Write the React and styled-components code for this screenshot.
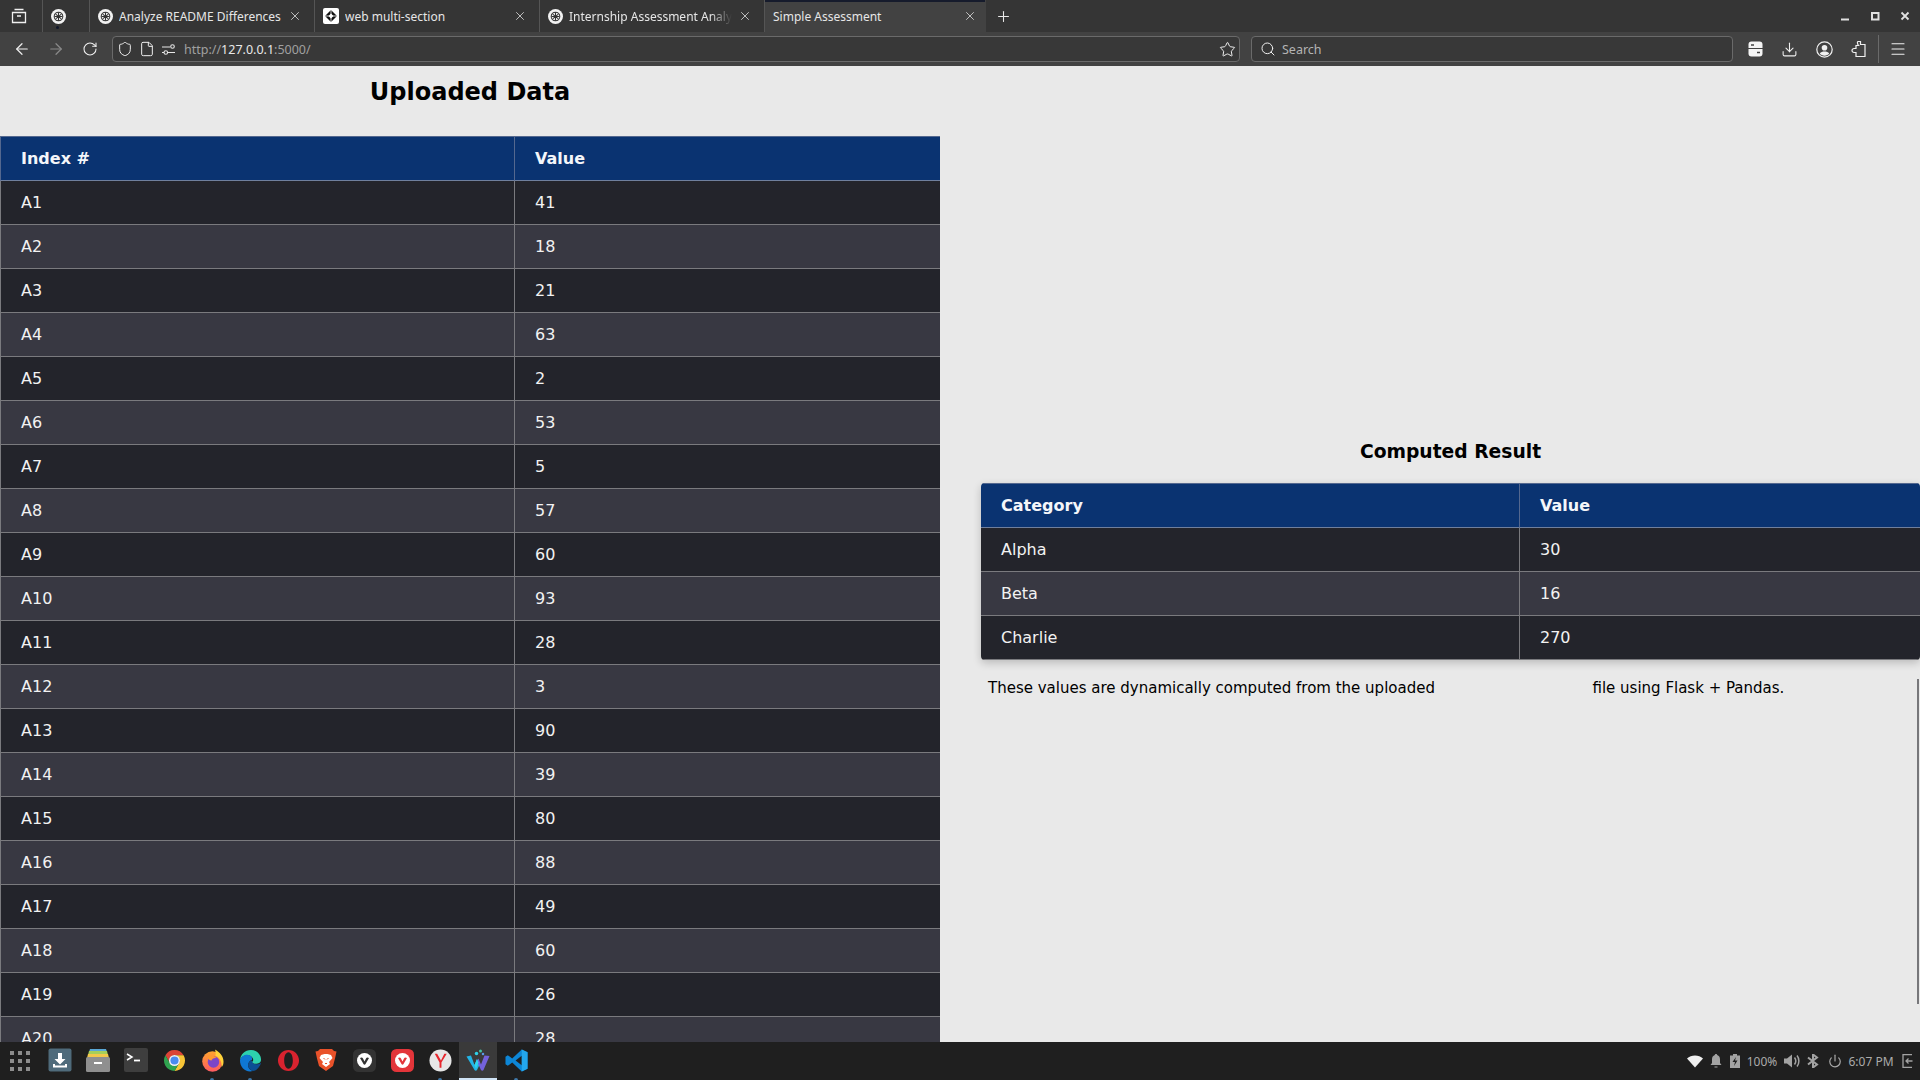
import React from 'react';
import styled, { createGlobalStyle } from 'styled-components';
import { ArrowLeft, ArrowRight, RotateCw, Shield, File, Star, Search, Download, Menu, X, Plus, Power } from 'lucide-react';

const GlobalStyle = createGlobalStyle`
    html, body { margin: 0; padding: 0; height: 100%; overflow: hidden; }
    #root { height: 100%; }
`;

const Screen = styled.div`
    position: relative;
    height: 1080px;
    display: flex;
    flex-direction: column;
    overflow: hidden;
    font-family: "DejaVu Sans", sans-serif;
    background: #e9e9e9;
`;

const TabStrip = styled.div`
    height: 32px;
    flex: none;
    display: flex;
    align-items: stretch;
    background: #353535;
    color: #e8e8e8;
    font-family: "Noto Sans", sans-serif;
    font-size: 12px;
`;
const StripButton = styled.div`
    width: ${p => p.$width}px;
    flex: none;
    display: flex;
    align-items: center;
    justify-content: center;
`;
const Pinned = styled.div`
    width: 48px;
    flex: none;
    position: relative;
    box-sizing: border-box;
    display: flex;
    align-items: center;
    margin-left: 5px;
    padding-left: 8px;
    border-left: 1px solid #555;
    border-right: 1px solid #555;
`;
const PinnedDot = styled.span`
    position: absolute;
    left: 13px;
    bottom: 3px;
    width: 3px;
    height: 3px;
    border-radius: 50%;
    background: #10162a;
`;
const Tab = styled.div`
    width: ${p => p.$width}px;
    flex: none;
    box-sizing: border-box;
    display: flex;
    align-items: center;
    gap: 6px;
    padding: 0 ${p => p.$active ? 8 : 12}px 0 8px;
    background: ${p => p.$active ? '#424242' : 'transparent'};
    border-right: 1px solid ${p => p.$active ? 'transparent' : '#555'};
    box-shadow: ${p => p.$active ? 'inset 0 2px 0 #161b2c' : 'none'};
`;
const TabTitle = styled.span`
    flex: 1;
    white-space: nowrap;
    overflow: hidden;
    color: #e6e6e6;
    mask-image: ${p => p.$fade ? 'linear-gradient(to left, transparent 0, #000 22px)' : 'none'};
`;
const WindowButtons = styled.div`
    margin-left: auto;
    display: flex;
    align-items: center;
    gap: 20px;
    padding-right: 10px;
`;
const Toolbar = styled.div`
    height: 34px;
    flex: none;
    display: flex;
    align-items: center;
    padding-left: 5px;
    background: #424242;
    color: #f0f0f0;
    font-family: "Noto Sans", sans-serif;
    font-size: 12.5px;
`;
const ToolButton = styled.div`
    width: ${p => p.$width || 34}px;
    margin-left: ${p => p.$gap || 0}px;
    flex: none;
    display: flex;
    align-items: center;
    justify-content: center;
    color: ${p => p.$dim ? '#8a8a8a' : '#f0f0f0'};
`;
const Field = styled.div`
    width: ${p => p.$width}px;
    height: 26px;
    margin-left: ${p => p.$gap}px;
    flex: none;
    box-sizing: border-box;
    display: flex;
    align-items: center;
    gap: 6px;
    padding: 0 3px 0 ${p => p.$pad}px;
    background: #383838;
    border: 1px solid #6a6a6a;
    border-radius: 4px;
`;
const UrlText = styled.span`
    flex: 1;
    margin-left: 2px;
    color: #a0a0a0;
    b { font-weight: 400; color: #e8e8e8; }
`;
const SearchText = styled.span`
    color: #b4b4b4;
`;
const ToolSeparator = styled.div`
    width: 1px;
    height: 28px;
    margin: 0 2px;
    background: #6a6a6a;
`;
const Page = styled.main`
    flex: 1;
    min-height: 0;
    display: flex;
    gap: 41px;
    overflow: hidden;
    background: #e9e9e9;
    color: #000;
`;
const LeftColumn = styled.section`
    width: 940px;
    flex: none;
`;
const RightColumn = styled.section`
    flex: 1;
    padding-top: 374px;
`;
const MainTitle = styled.h1`
    margin: 0;
    height: 70px;
    padding-top: 12px;
    box-sizing: border-box;
    text-align: center;
    font-size: 24px;
    line-height: 28px;
    font-weight: 700;
`;
const SubTitle = styled.h2`
    margin: 0 0 19px;
    height: 24px;
    text-align: center;
    font-size: 18.72px;
    line-height: 24px;
    font-weight: 700;
`;
const DataTable = styled.table`
    width: 100%;
    border-collapse: separate;
    border-spacing: 0;
    table-layout: fixed;
    font-size: 16px;
    color: #f2f2f2;
    border-radius: ${p => p.$round ? 4 : 0}px;
    overflow: hidden;
    box-shadow: ${p => p.$round ? '0 3px 8px rgba(0, 0, 0, 0.2)' : 'none'};
    ${p => p.$round && 'th:first-child, td:first-child { border-left: none; }'}
`;
const SplitCol = styled.col`
    width: ${p => p.$width}px;
`;
const HeadCell = styled.th`
    height: 45px;
    box-sizing: border-box;
    padding: 0 20px;
    text-align: left;
    font-weight: 700;
    color: #f4f6fa;
    background: #0a3371;
    border-top: 1px solid #54688f;
    border-bottom: 1px solid #6f7f9d;
    border-left: 1px solid #54688f;
`;
const Cell = styled.td`
    height: 44px;
    box-sizing: border-box;
    padding: 0 20px;
    background: ${p => p.$even ? '#383842' : '#23242b'};
    border-bottom: 1px solid #7a7a7e;
    border-left: 1px solid #7a7a7e;
`;
const Note = styled.p`
    margin: 0;
    padding: 16px 0 0 7px;
    font-size: 15px;
    line-height: 24px;
`;
const Hidden = styled.span`
    display: inline-block;
    width: 148px;
`;
const ScrollThumb = styled.div`
    position: absolute;
    top: 679px;
    right: 1px;
    width: 2px;
    height: 325px;
    background: #77777a;
`;
const Taskbar = styled.footer`
    height: 38px;
    flex: none;
    display: flex;
    align-items: center;
    background: #1f1f1f;
    font-family: "Noto Sans", sans-serif;
    font-size: 12px;
    color: #a9a9a9;
`;
const GridDots = styled.div`
    width: 20px;
    height: 20px;
    margin: 0 11px 0 10px;
    flex: none;
    display: grid;
    grid-template-columns: repeat(3, 4px);
    justify-content: space-between;
    align-content: space-between;
    i { height: 4px; background: #8d8d8d; }
`;
const Launcher = styled.div`
    width: 38px;
    height: 38px;
    flex: none;
    position: relative;
    display: flex;
    align-items: center;
    justify-content: center;
    padding-bottom: 2px;
    box-sizing: border-box;
    background: ${p => p.$active ? '#3a3a3a' : 'transparent'};
    box-shadow: ${p => p.$active ? 'inset 0 -2px 0 #cfe3f5' : 'none'};
`;
const RunningDot = styled.span`
    position: absolute;
    bottom: 0;
    left: 17px;
    width: 4px;
    height: 2px;
    border-radius: 2px 2px 0 0;
    background: #3f78a8;
`;
const Tray = styled.div`
    margin-left: auto;
    display: flex;
    align-items: center;
    padding-right: 2px;
    color: #ababab;
`;
const TraySlot = styled.div`
    width: ${p => p.$width}px;
    flex: none;
    display: flex;
    align-items: center;
    justify-content: center;
`;

const OpenAiIcon = () => (
    <svg width="15" height="15" viewBox="0 0 16 16">
        <circle cx="8" cy="8" r="8" fill="#f2f2f2" />
        <g fill="none" stroke="#333" strokeWidth="1.1">
            <circle cx="8" cy="8" r="4.6" />
            <path d="M5 5.500l6 5M11 5.500l-6 5M8 3.400v9.200M3.800 8h8.400" />
        </g>
    </svg>
);
const KnotIcon = () => (
    <svg width="16" height="16" viewBox="0 0 16 16">
        <rect width="16" height="16" rx="2" fill="#fff" />
        <path d="M8 2l6 6-6 6-6-6z" fill="#111" />
        <path d="M8 5.500L10.500 8 8 10.500 5.500 8z" fill="#fff" />
        <path d="M8 2v12M2 8h12" stroke="#fff" strokeWidth=".8" />
    </svg>
);
const ArchiveIcon = () => (
    <svg width="16" height="16" viewBox="0 0 16 16" fill="none" stroke="#f0f0f0" strokeWidth="1.300">
        <path d="M3.500 1.500h9M1.500 4.500h13v10h-13zM6 8h4" />
    </svg>
);
const TuneIcon = () => (
    <svg width="15" height="16" viewBox="0 0 15 16" fill="none" stroke="#e8e8e8" strokeWidth="1.100">
        <path d="M1 6h8M1 11.500h2M7 11.500h7" />
        <circle cx="11.500" cy="5.500" r="1.800" />
        <circle cx="4.800" cy="11.500" r="1.800" />
    </svg>
);
const ToolboxIcon = () => (
    <svg width="15" height="16" viewBox="0 0 15 16">
        <rect x=".5" y=".5" width="14" height="15" rx="3" fill="#f4f4f4" />
        <path d="M0 7.500h15" stroke="#424242" />
        <path d="M3 4h3M9 11.500h3" stroke="#424242" strokeWidth="1.500" />
    </svg>
);
const AccountIcon = () => (
    <svg width="17" height="17" viewBox="0 0 17 17">
        <circle cx="8.500" cy="8.500" r="7.700" fill="none" stroke="#f0f0f0" strokeWidth="1.200" />
        <circle cx="8.500" cy="6.800" r="2.800" fill="#f0f0f0" />
        <path d="M3.800 12.600c1-1.500 2.800-2 4.700-2s3.700.500 4.700 2c-1 1.300-2.800 2.200-4.700 2.200s-3.700-.900-4.700-2.200z" fill="#f0f0f0" />
    </svg>
);
const PuzzleIcon = () => (
    <svg width="16" height="18" viewBox="0 0 16 18" fill="none" stroke="#f0f0f0" strokeWidth="1.200">
        <path d="M7 1.500h2.500v3H14v12H5v-4H3a2 2 0 0 1-2-2 2 2 0 0 1 2-2h2v-3h2.500C6.500 4.500 6 1.500 7 1.500z" />
    </svg>
);
const MinimizeIcon = () => (
    <svg width="10" height="10" viewBox="0 0 10 10"><path d="M1 8.500h8" stroke="#e0e0e0" strokeWidth="2" /></svg>
);
const MaximizeIcon = () => (
    <svg width="10" height="10" viewBox="0 0 10 10"><rect x="2" y="2" width="6.500" height="6.500" fill="none" stroke="#e0e0e0" strokeWidth="2" /></svg>
);
const CloseIcon = () => (
    <svg width="10" height="10" viewBox="0 0 10 10"><path d="M1.500 1.500l7 7M8.500 1.500l-7 7" stroke="#e0e0e0" strokeWidth="1.800" /></svg>
);
const DownloadTile = () => (
    <svg width="24" height="24" viewBox="0 0 24 24">
        <rect x=".500" y=".500" width="23" height="23" rx="2" fill="#4f6b7b" />
        <path d="M10 5h4v6h3.500L12 16.500 6.500 11H10zM5 16v3.500h14V16h-2v1.500H7V16z" fill="#fff" />
    </svg>
);
const FilesTile = () => (
    <svg width="24" height="26" viewBox="0 0 24 26">
        <path d="M4 2h16l1 3H3z" fill="#5aa8d6" />
        <path d="M3 4h18l1 4H2z" fill="#a6ce5a" />
        <path d="M2 7h20l1 4H1z" fill="#f1c84b" />
        <rect y="10" width="24" height="15" rx="1.500" fill="#8f8f8f" />
        <rect x="8" y="15" width="8" height="2" fill="#fff" />
    </svg>
);
const TerminalTile = () => (
    <svg width="24" height="24" viewBox="0 0 24 24">
        <rect width="24" height="24" rx="2" fill="#3e3e3e" />
        <path d="M3 6l5 3-5 3" fill="none" stroke="#fff" strokeWidth="1.500" />
        <path d="M10 12.500h6" stroke="#fff" strokeWidth="1.800" />
    </svg>
);
const ChromeLogo = () => (
    <svg width="23" height="23" viewBox="0 0 48 48">
        <path d="M24 2A22 22 0 0 1 43 13H24A11 11 0 0 0 14.500 29.500L5 13A22 22 0 0 1 24 2z" fill="#db4437" />
        <path d="M24 13H43A22 22 0 0 1 24 46L33.500 29.500A11 11 0 0 0 24 13z" fill="#f7c436" />
        <path d="M5 13L14.500 29.500A11 11 0 0 0 33.500 29.500L24 46A22 22 0 0 1 5 13z" fill="#2fa34f" />
        <circle cx="24" cy="24" r="11.500" fill="#f4f4f4" />
        <circle cx="24" cy="24" r="8.500" fill="#4a8bf0" />
    </svg>
);
const FirefoxLogo = () => (
    <svg width="23" height="23" viewBox="0 0 48 48">
        <defs>
            <linearGradient id="foxBody" x1="0" y1="0" x2="0" y2="1">
                <stop offset="0" stopColor="#ffa52e" />
                <stop offset="1" stopColor="#ff5a62" />
            </linearGradient>
        </defs>
        <circle cx="24" cy="26" r="21.500" fill="url(#foxBody)" />
        <path d="M29 1c10 5 18 14 18 25 0 5-1 9-4 12 1-10-3-20-13-24 1-4 1-9-1-13z" fill="#ffd23a" />
        <circle cx="26" cy="27" r="12" fill="#7c46c8" />
        <path d="M13 16c6-4 15-3 19 3-5-1-9 1-10 5-4 0-8-3-9-8z" fill="#ff9a2e" />
    </svg>
);
const EdgeLogo = () => (
    <svg width="23" height="23" viewBox="0 0 48 48">
        <path d="M2 24C3 11 12 2 25 2c12 0 21 9 21 20 0 6-5 9-11 9-5 0-8-2-8-4 3-2 3-4 2-7-2-5-7-8-13-7C9 14 3 18 2 24z" fill="#2dd1ae" />
        <path d="M2 24c1-7 8-12 15-12 8 0 12 6 10 11-4 1-8 5-8 11 0 5 3 10 10 12-2 .700-4 1-6 1C11 47 2 36 2 24z" fill="#0f78d4" />
        <path d="M19 34c0-5 3-9 8-10 0 5 4 8 9 8 4 0 7-1 10-4-2 10-11 18-17 18-6-2-10-7-10-12z" fill="#0c4f94" />
    </svg>
);
const OperaLogo = () => (
    <svg width="23" height="23" viewBox="0 0 48 48">
        <path fillRule="evenodd" d="M24 2c12 0 22 10 22 22S36 46 24 46 2 36 2 24 12 2 24 2zm0 5c-5.500 0-9 7.500-9 17s3.500 17 9 17 9-7.500 9-17-3.500-17-9-17z" fill="#d9232f" />
    </svg>
);
const BraveLogo = () => (
    <svg width="22" height="24" viewBox="0 0 44 48">
        <path d="M10 2h24l4 4 5 1-3 14-4 15-14 10L8 36 4 21 1 7l5-1z" fill="#e9522a" />
        <path d="M12 14l7-2h6l7 2 3 6-7 8 2 4-8 6-8-6 2-4-7-8z" fill="#fff" />
        <path d="M17 20l3 3M27 20l-3 3M20 31h4" stroke="#e9522a" strokeWidth="2" fill="none" />
    </svg>
);
const VivaldiLogo = ({ bg }) => (
    <svg width="23" height="23" viewBox="0 0 46 46">
        <rect width="46" height="46" rx="11" fill={bg} />
        <circle cx="23" cy="23" r="15" fill="#fff" />
        <path d="M14 18c3-2 5-1 6 1l3 6 3-6c1-2 3-3 6-1l-7 12c-1 2-3 2-4 0z" fill={bg} />
    </svg>
);
const YandexLogo = () => (
    <svg width="23" height="23" viewBox="0 0 48 48">
        <circle cx="24" cy="24" r="23" fill="#e6e6e6" />
        <path d="M22 39V28L12 10h5l8 14 7-14h5l-11 18v11z" fill="#e8262d" />
    </svg>
);
const WaveLogo = () => (
    <svg width="24" height="23" viewBox="0 0 48 46">
        <path d="M1 15l9-2 7 19 5-12 5 12-5 10c-1 2-4 2-5 0z" fill="#22b4e6" />
        <path d="M25 19l5 12 7-18 10 1-12 28c-1 2-4 2-5 0l-8-17z" fill="#7462dc" />
        <path d="M17 32l5-12 3 7-5 13z" fill="#2fd4ea" />
        <circle cx="21" cy="9" r="3.500" fill="#2fd0e8" />
        <circle cx="29" cy="4" r="3" fill="#42c5a8" />
        <circle cx="34" cy="10" r="2.500" fill="#5a9be8" />
    </svg>
);
const CodeLogo = () => (
    <svg width="23" height="23" viewBox="0 0 24 24">
        <path d="M17.500 .500L23.500 3.300V20.700L17.500 23.500L7.500 14L3 17.500L.500 16V8L3 6.500L7.500 10zM17.500 7L11 12l6.500 5z" fill="#0d86d6" />
        <path d="M17.500 .500l6 2.800v17.400l-6 2.800z" fill="#23a7ee" />
    </svg>
);
const WifiFan = () => (
    <svg width="16" height="13" viewBox="0 0 16 13"><path d="M0 3.500C2 1.500 5 .500 8 .500s6 1 8 3l-8 9z" fill="#efefef" /></svg>
);
const BellIcon = () => (
    <svg width="12" height="14" viewBox="0 0 12 14" fill="#a3a3a3">
        <path d="M6 0c.800 0 1.200.500 1.200 1.100C9 1.700 10 3.300 10 5.200V9l1.500 2H.500L2 9V5.200C2 3.300 3 1.700 4.800 1.100 4.800.500 5.200 0 6 0z" />
        <path d="M4.500 12.500h3V13.500h-3z" />
    </svg>
);
const BatteryIcon = () => (
    <svg width="10" height="14" viewBox="0 0 10 14">
        <path d="M3 0h4v1.500h3V14H0V1.500h3z" fill="#a3a3a3" />
        <path d="M6 3L2.500 8H5l-1 4 3.500-5.500H5z" fill="#1f1f1f" />
    </svg>
);
const SpeakerIcon = () => (
    <svg width="16" height="14" viewBox="0 0 16 14">
        <path d="M0 4.500h3L8 .500v13l-5-4H0z" fill="#a3a3a3" />
        <path d="M10.500 3.500c1.500 2 1.500 5 0 7M13 1.500c2.500 3 2.500 8 0 11" fill="none" stroke="#a3a3a3" strokeWidth="1.500" />
    </svg>
);
const BluetoothIcon = () => (
    <svg width="12" height="14" viewBox="0 0 12 14">
        <path d="M1 3.500L10 10.500 6 13.500V.500l4 3L1 10.500" fill="none" stroke="#a3a3a3" strokeWidth="2" />
    </svg>
);
const SessionIcon = () => (
    <svg width="11" height="14" viewBox="0 0 11 14" fill="none" stroke="#a3a3a3" strokeWidth="1.300">
        <path d="M10 .700H1v12.600h9" />
        <path d="M10.500 7H4M6.500 4.500L4 7l2.500 2.500" />
    </svg>
);

const uploaded = [41, 18, 21, 63, 2, 53, 5, 57, 60, 93, 28, 3, 90, 39, 80, 88, 49, 60, 26, 28];
const computed = [['Alpha', 30], ['Beta', 16], ['Charlie', 270]];

const launchers = [
    { logo: <DownloadTile /> },
    { logo: <FilesTile /> },
    { logo: <TerminalTile /> },
    { logo: <ChromeLogo /> },
    { logo: <FirefoxLogo />, running: true },
    { logo: <EdgeLogo />, running: true },
    { logo: <OperaLogo /> },
    { logo: <BraveLogo /> },
    { logo: <VivaldiLogo bg="#333" /> },
    { logo: <VivaldiLogo bg="#e3353a" /> },
    { logo: <YandexLogo />, running: true },
    { logo: <WaveLogo />, active: true },
    { logo: <CodeLogo />, running: true },
];

const ResultTable = ({ head, rows, split, round }) => (
    <DataTable $round={round}>
        <colgroup>
            <SplitCol $width={split} />
            <col />
        </colgroup>
        <thead>
            <tr>{head.map(h => <HeadCell key={h}>{h}</HeadCell>)}</tr>
        </thead>
        <tbody>
            {rows.map(([name, value], idx) => (
                <tr key={name}>
                    <Cell $even={idx % 2 === 1}>{name}</Cell>
                    <Cell $even={idx % 2 === 1}>{value}</Cell>
                </tr>
            ))}
        </tbody>
    </DataTable>
);

const App = () => (
    <Screen>
        <GlobalStyle />
        <TabStrip>
            <StripButton $width={37}><ArchiveIcon /></StripButton>
            <Pinned><OpenAiIcon /><PinnedDot /></Pinned>
            <Tab $width={225}><OpenAiIcon /><TabTitle>Analyze README Differences</TabTitle><X size={14} strokeWidth={1.3} /></Tab>
            <Tab $width={225}><KnotIcon /><TabTitle>web multi-section</TabTitle><X size={14} strokeWidth={1.3} /></Tab>
            <Tab $width={225}><OpenAiIcon /><TabTitle $fade>Internship Assessment Analysis</TabTitle><X size={14} strokeWidth={1.3} /></Tab>
            <Tab $width={221} $active><TabTitle>Simple Assessment</TabTitle><X size={14} strokeWidth={1.3} /></Tab>
            <StripButton $width={34}><Plus size={17} strokeWidth={1.5} /></StripButton>
            <WindowButtons>
                <MinimizeIcon />
                <MaximizeIcon />
                <CloseIcon />
            </WindowButtons>
        </TabStrip>
        <Toolbar>
            <ToolButton><ArrowLeft size={18} strokeWidth={1.6} /></ToolButton>
            <ToolButton $dim><ArrowRight size={18} strokeWidth={1.6} /></ToolButton>
            <ToolButton><RotateCw size={16} strokeWidth={1.6} /></ToolButton>
            <Field $width={1128} $gap={5} $pad={4}>
                <Shield size={16} strokeWidth={1.5} />
                <File size={16} strokeWidth={1.5} />
                <TuneIcon />
                <UrlText>http://<b>127.0.0.1</b>:5000/</UrlText>
                <Star size={17} strokeWidth={1.4} />
            </Field>
            <Field $width={482} $gap={11} $pad={8}>
                <Search size={16} strokeWidth={1.5} />
                <SearchText>Search</SearchText>
            </Field>
            <ToolButton $width={34.5} $gap={5}><ToolboxIcon /></ToolButton>
            <ToolButton $width={34.5}><Download size={17} strokeWidth={1.5} /></ToolButton>
            <ToolButton $width={34.5}><AccountIcon /></ToolButton>
            <ToolButton $width={34.5}><PuzzleIcon /></ToolButton>
            <ToolSeparator />
            <ToolButton><Menu size={18} strokeWidth={1.5} /></ToolButton>
        </Toolbar>
        <Page>
            <LeftColumn>
                <MainTitle>Uploaded Data</MainTitle>
                <ResultTable head={['Index #', 'Value']} rows={uploaded.map((v, i) => [`A${i + 1}`, v])} split={514} />
            </LeftColumn>
            <RightColumn>
                <SubTitle>Computed Result</SubTitle>
                <ResultTable head={['Category', 'Value']} rows={computed} split={538} round />
                <Note>These values are dynamically computed from the uploaded <Hidden /> file using Flask + Pandas.</Note>
            </RightColumn>
        </Page>
        <ScrollThumb />
        <Taskbar>
            <GridDots>{Array.from({ length: 9 }, (_, i) => <i key={i} />)}</GridDots>
            {launchers.map((item, idx) => (
                <Launcher key={idx} $active={item.active}>
                    {item.logo}
                    {item.running && <RunningDot />}
                </Launcher>
            ))}
            <Tray>
                <TraySlot $width={21}><WifiFan /></TraySlot>
                <TraySlot $width={21}><BellIcon /></TraySlot>
                <TraySlot $width={17}><BatteryIcon /></TraySlot>
                <TraySlot $width={38}>100%</TraySlot>
                <TraySlot $width={21}><SpeakerIcon /></TraySlot>
                <TraySlot $width={21}><BluetoothIcon /></TraySlot>
                <TraySlot $width={23}><Power size={14} strokeWidth={2} /></TraySlot>
                <TraySlot $width={50}>6:07 PM</TraySlot>
                <TraySlot $width={22}><SessionIcon /></TraySlot>
            </Tray>
        </Taskbar>
    </Screen>
);

export default App;
